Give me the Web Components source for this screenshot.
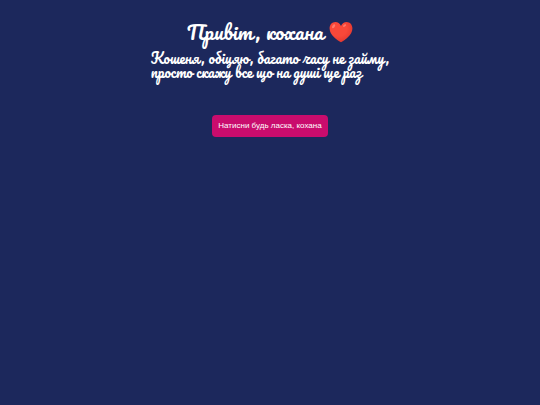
<!DOCTYPE html>
<html lang="uk">
<head>
<meta charset="UTF-8">
<meta name="viewport" content="width=device-width, initial-scale=1.0">
<title>Привіт, кохана</title>
<style>
  body {
    margin: 0;
    min-height: 100vh;
    background: #1c285c;
    color: #fff;
    font-family: Pacifico, 'Liberation Serif', cursive;
  }
</style>
</head>
<body>
<love-page>
  <love-title slot="title">Привіт, кохана</love-title>
  <love-message slot="message">Кошеня, обіцяю, багато часу не займу,<br>просто скажу все що на душі ще раз</love-message>
  <love-button>Натисни будь ласка, кохана</love-button>
</love-page>

<script>
class LovePage extends HTMLElement {
  constructor() {
    super();
    this.attachShadow({ mode: 'open' });
    this.shadowRoot.innerHTML = `
      <style>
        :host {
          display: block;
        }
        main {
          display: flex;
          flex-direction: column;
          align-items: center;
          padding: 17px 16px;
        }
        header {
          display: flex;
          flex-direction: column;
          align-items: center;
          gap: 4px;
          margin-bottom: 36px;
        }
      </style>
      <main>
        <header>
          <slot name="title"></slot>
          <slot name="message"></slot>
        </header>
        <slot></slot>
      </main>
    `;
  }
}

class HeartIcon extends HTMLElement {
  constructor() {
    super();
    this.attachShadow({ mode: 'open' });
    this.shadowRoot.innerHTML = `
      <style>
        :host {
          display: block;
          width: 24px;
          height: 22px;
        }
        svg {
          display: block;
          width: 100%;
          height: 100%;
        }
      </style>
      <svg viewBox="0 0 24 22" aria-hidden="true">
        <defs>
          <radialGradient id="shade" cx="0.4" cy="0.35" r="0.7">
            <stop offset="0.5" stop-color="#f94839"/>
            <stop offset="1" stop-color="#e0362f"/>
          </radialGradient>
        </defs>
        <path fill="url(#shade)" d="M12 5C10.9 2.3 8.8 1 6.4 1 3 1 .6 3.8.6 7.4c0 6.2 7 11.2 11.4 13.9 4.4-2.7 11.4-7.7 11.4-13.9C23.4 3.8 21 1 17.6 1 15.2 1 13.1 2.3 12 5z"/>
        <ellipse cx="4.6" cy="5.3" rx="1.2" ry="2.2" fill="#ff7a6b" transform="rotate(35 4.6 5.3)"/>
        <ellipse cx="15.6" cy="4.6" rx="1" ry="1.8" fill="#ff7a6b" transform="rotate(50 15.6 4.6)"/>
      </svg>
    `;
  }
}

class LoveTitle extends HTMLElement {
  constructor() {
    super();
    this.attachShadow({ mode: 'open' });
    this.shadowRoot.innerHTML = `
      <style>
        :host {
          display: block;
        }
        h1 {
          display: flex;
          align-items: center;
          gap: 6px;
          margin: 0;
          font-size: 20px;
          font-weight: 400;
          line-height: 30px;
        }
      </style>
      <h1><span><slot></slot></span><heart-icon></heart-icon></h1>
    `;
  }
}

class LoveMessage extends HTMLElement {
  constructor() {
    super();
    this.attachShadow({ mode: 'open' });
    this.shadowRoot.innerHTML = `
      <style>
        :host {
          display: block;
        }
        p {
          margin: 0;
          font-size: 14px;
          line-height: 14px;
        }
      </style>
      <p><slot></slot></p>
    `;
  }
}

class LoveButton extends HTMLElement {
  constructor() {
    super();
    this.attachShadow({ mode: 'open' });
    this.shadowRoot.innerHTML = `
      <style>
        :host {
          display: block;
        }
        button {
          display: block;
          padding: 4px 6px;
          border: 0;
          border-radius: 4px;
          background: #c90c6d;
          color: #fff;
          font: 8px/14px 'Liberation Sans', Arial, sans-serif;
          cursor: pointer;
        }
        button:hover {
          background: #e01a80;
        }
      </style>
      <button type="button"><slot></slot></button>
    `;
  }
}

customElements.define('love-page', LovePage);
customElements.define('heart-icon', HeartIcon);
customElements.define('love-title', LoveTitle);
customElements.define('love-message', LoveMessage);
customElements.define('love-button', LoveButton);
</script>
</body>
</html>
